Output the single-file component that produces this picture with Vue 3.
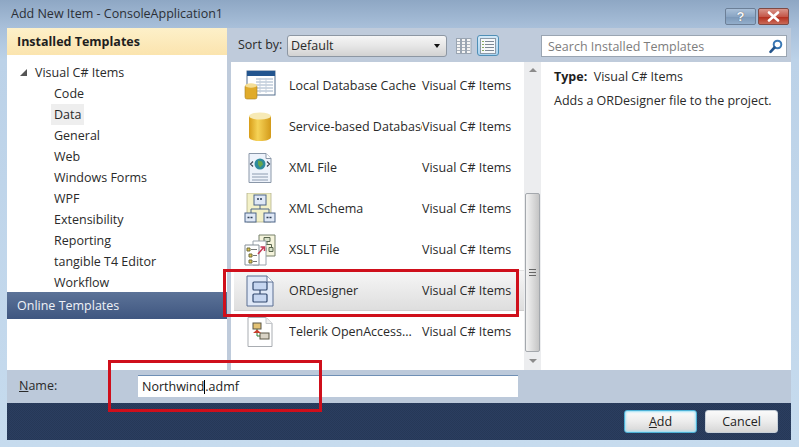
<script setup>
const tree = ['Code', 'Data', 'General', 'Web', 'Windows Forms', 'WPF', 'Extensibility', 'Reporting', 'tangible T4 Editor', 'Workflow']
const rows = [
  { id: 'cache', name: 'Local Database Cache' },
  { id: 'db', name: 'Service-based Database' },
  { id: 'xml', name: 'XML File' },
  { id: 'xsd', name: 'XML Schema' },
  { id: 'xslt', name: 'XSLT File' },
  { id: 'or', name: 'ORDesigner', selected: true },
  { id: 'tel', name: 'Telerik OpenAccess...' }
]
</script>

<template>
  <div class="window">
    <header class="titlebar">
      <span class="title">Add New Item - ConsoleApplication1</span>
      <div class="caption">
        <span class="cap help">?</span>
        <span class="cap close">
          <svg width="13" height="11" viewBox="0 0 13 11"><path d="M2 1.5l9 8M11 1.5l-9 8" stroke="#fff" stroke-width="2.6" stroke-linecap="round"/></svg>
        </span>
      </div>
    </header>

    <main class="main">
      <aside class="left">
        <div class="left-head">Installed Templates</div>
        <div class="tree">
          <div class="tree-root"><i class="tri"></i>Visual C# Items</div>
          <div v-for="t in tree" :key="t" class="tree-item"><span :class="{ cur: t === 'Data' }">{{ t }}</span></div>
        </div>
        <div class="online">Online Templates</div>
      </aside>

      <section class="right">
        <div class="toolbar">
          <span class="sort-label">Sort by:</span>
          <div class="select">Default<i class="drop"></i></div>
          <span class="view">
            <svg width="16" height="16" viewBox="0 0 16 16"><g fill="#f4f4f4" stroke="#9aa5b2"><rect x=".5" y=".5" width="4" height="15"/><rect x="5.5" y=".5" width="4" height="15"/><rect x="10.5" y=".5" width="4.5" height="15"/></g><path d="M1 3.5h3M1 6.5h3M1 9.5h3M1 12.5h3M6 3.5h3M6 6.5h3M6 9.5h3M6 12.5h3M11 3.5h3M11 6.5h3M11 9.5h3M11 12.5h3" stroke="#a9b1bb"/></svg>
          </span>
          <span class="view on">
            <svg width="16" height="16" viewBox="0 0 16 16"><rect x=".5" y=".5" width="15" height="15" fill="#f6f8fa" stroke="#8c9aa8"/><path d="M2 3.5h2M2 6.5h2M2 9.5h2M2 12.5h2" stroke="#88a860"/><path d="M5 3.5h9M5 6.5h9M5 9.5h9M5 12.5h9" stroke="#7d8894"/></svg>
          </span>
          <div class="search">
            <span>Search Installed Templates</span>
            <svg width="14" height="15" viewBox="0 0 14 15"><circle cx="8.5" cy="5.5" r="3.8" fill="none" stroke="#3a78b5" stroke-width="2"/><path d="M5.5 8.5L1.5 12.8" stroke="#24558c" stroke-width="2.6" stroke-linecap="round"/></svg>
          </div>
        </div>

        <div class="content">
          <div class="list">
            <div v-for="r in rows" :key="r.id" class="row" :class="{ sel: r.selected }">
              <span class="ico">
                <svg v-if="r.id === 'cache'" width="32" height="32" viewBox="0 0 32 32">
                  <rect x="3" y="1" width="28" height="24" fill="#fff" stroke="#56708f"/>
                  <rect x="3" y="1" width="28" height="5" fill="#23558f"/>
                  <path d="M12 9h17M12 12h17M12 15h17M12 18h17M12 21h17" stroke="#9db0c6"/>
                  <path d="M16 8v15M22 8v15" stroke="#c5d0dc"/>
                  <rect x="1" y="15" width="12" height="14" rx="2" fill="#e0ab2b" stroke="#a98220" stroke-width=".6"/>
                  <ellipse cx="7" cy="15.5" rx="6" ry="2.2" fill="#f4de97"/>
                </svg>
                <svg v-else-if="r.id === 'db'" width="32" height="32" viewBox="0 0 32 32">
                  <defs><linearGradient id="g" x1="0" x2="1" y1="0" y2="0"><stop offset="0" stop-color="#d89d18"/><stop offset=".4" stop-color="#f6d357"/><stop offset="1" stop-color="#d39a1a"/></linearGradient></defs>
                  <path d="M5 5v21c0 2.5 5 4 11 4s11-1.500 11-4V5z" fill="url(#g)"/>
                  <ellipse cx="16" cy="5" rx="11" ry="3.6" fill="#f7eab6"/>
                </svg>
                <svg v-else-if="r.id === 'xml'" width="32" height="32" viewBox="0 0 32 32">
                  <path d="M5 1.500h17l5 5v24H5z" fill="#eef3fb" stroke="#8a97a8"/>
                  <path d="M22 1.500v5h5" fill="#fff" stroke="#8a97a8"/>
                  <path d="M8 22h16M8 25h16M8 28h16" stroke="#8d9cb0"/>
                  <circle cx="16" cy="12" r="5.500" fill="#2f8a9c"/>
                  <path d="M14 8.500l4 1 1 3-3 3-2-3z" fill="#67a64d"/>
                  <path d="M9 9.500l-2.500 2.500 2.500 2.500M23 9.500l2.500 2.500-2.500 2.500" fill="none" stroke="#3c4756" stroke-width="1.200"/>
                </svg>
                <svg v-else-if="r.id === 'xsd'" width="32" height="32" viewBox="0 0 32 32">
                  <path d="M3 0h24v29H3z" fill="#f3f1c8" stroke="#a9a87e" stroke-width=".7"/>
                  <rect x="10" y="2" width="12" height="10" fill="#dfe8f6" stroke="#4c6587"/>
                  <path d="M13 6h6" stroke="#2d3d55" stroke-width="1.500" stroke-dasharray="2 1"/>
                  <path d="M16 12v4M7 20v-4h18v4" fill="none" stroke="#4c6587"/>
                  <rect x="1" y="20" width="11" height="9" fill="#dfe8f6" stroke="#4c6587"/>
                  <rect x="20" y="20" width="11" height="9" fill="#dfe8f6" stroke="#4c6587"/>
                  <path d="M3.500 24.500h6M22.500 24.500h6" stroke="#2d3d55" stroke-width="1.500" stroke-dasharray="2 1"/>
                </svg>
                <svg v-else-if="r.id === 'xslt'" width="32" height="32" viewBox="0 0 32 32">
                  <path d="M15 1h16v21H15z" fill="#f5f4dc" stroke="#76806a"/>
                  <path d="M20 3.500h6v4h-6zM17 13.500h5v4h-5zM25 13.500h4v4h-4z" fill="#d8e0c8" stroke="#59654e"/>
                  <path d="M23 7.500v3M19.500 13.500v-3h8v3" fill="none" stroke="#59654e"/>
                  <path d="M9 7h13v24H9z" fill="#fff" stroke="#9aa3ad"/>
                  <path d="M1 11h14v20H1z" fill="#fff" stroke="#858f99"/>
                  <path d="M3 14h3v3H3z" fill="#e3c64c" stroke="#6c6a3a"/><path d="M7 15.500h6" stroke="#777"/>
                  <path d="M5 20h3v3H5z" fill="#e3c64c" stroke="#6c6a3a"/><path d="M9 21.500h4" stroke="#777"/>
                  <path d="M5 26h3v3H5z" fill="#e3c64c" stroke="#6c6a3a"/><path d="M9 27.500h4" stroke="#777"/>
                  <path d="M14 20l6-7M16.500 13h4v4" fill="none" stroke="#c53a55" stroke-width="1.500"/>
                </svg>
                <svg v-else-if="r.id === 'or'" width="32" height="32" viewBox="0 0 32 32">
                  <path d="M3 1h20l6 6v24H3z" fill="#dfe8f7" stroke="#5b6f92"/>
                  <path d="M23 1v6h6" fill="#fff" stroke="#5b6f92"/>
                  <rect x="9" y="7" width="14" height="8" rx="1" fill="#c6d6f0" stroke="#33496f" stroke-width="1.200"/>
                  <rect x="9" y="19" width="14" height="8" rx="1" fill="#c6d6f0" stroke="#33496f" stroke-width="1.200"/>
                  <path d="M16 15v4" stroke="#33496f" stroke-width="1.200"/>
                </svg>
                <svg v-else width="32" height="32" viewBox="0 0 32 32">
                  <path d="M4 1.500h18l6 6v23H4z" fill="#fff" stroke="#a9adb2"/>
                  <path d="M22 1.500v6h6" fill="#f1f1f1" stroke="#c3c6ca"/>
                  <rect x="9" y="7" width="8" height="6" fill="#e3c274" stroke="#5b5747"/>
                  <rect x="16" y="17" width="9" height="6" fill="#d9d3c6" stroke="#5b5747"/>
                  <path d="M13 13v7h3" fill="none" stroke="#2e7a32"/>
                  <path d="M9 17l4-3.500 4 3.500z" fill="#c8402d"/>
                </svg>
              </span>
              <span class="nm">{{ r.name }}</span>
              <span class="ty">Visual C# Items</span>
            </div>
          </div>

          <div class="scroll">
            <i class="arr up"></i>
            <div class="thumb"><b></b></div>
            <i class="arr down"></i>
          </div>

          <div class="detail">
            <p class="d-type"><b>Type:</b>&nbsp; Visual C# Items</p>
            <p>Adds a ORDesigner file to the project.</p>
          </div>
        </div>
      </section>
    </main>

    <div class="namebar">
      <label class="nlabel"><u>N</u>ame:</label>
      <div class="ninput">Northwind<i class="caret"></i>.admf</div>
    </div>

    <footer class="footer">
      <button class="btn def"><u>A</u>dd</button>
      <button class="btn">Cancel</button>
    </footer>

    <div class="red red1"></div>
    <div class="red red2"></div>
  </div>
</template>

<style>
html, body { margin: 0; padding: 0; background: #c3d8ec; }
</style>

<style scoped>
.window {
  position: relative; width: 799px; height: 447px; box-sizing: border-box; overflow: hidden;
  padding: 0 8px 7px 7px; display: flex; flex-direction: column;
  background: linear-gradient(#8ea7c4 0, #a9c0da 28px, #bcd2e8 60px, #c6dbee 100%);
  font: 12.5px "Open Sans", "Noto Sans", sans-serif; color: #2a2a2a;
}
.titlebar { height: 28px; flex: none; display: flex; justify-content: space-between; position: relative; }
.title { padding: 5px 0 0 4px; font-size: 12.5px; line-height: 17px; color: #2b2f36; }
.caption { display: flex; gap: 2px; padding-top: 8px; margin-right: 2px; }
.cap { width: 31px; height: 17px; box-sizing: border-box; border-radius: 2px; display: flex; align-items: center; justify-content: center; font: bold 13px "Liberation Sans", sans-serif; }
.help { background: linear-gradient(#a9bfd8, #8ba6c4 50%, #7d99b9 55%, #93aecb); border: 1px solid #6c7f97; color: #f4f7fb; text-shadow: 0 0 1px #444; }
.close { background: linear-gradient(#d8958a, #c5584a 50%, #b5301f 55%, #c96a58); border: 1px solid #7f4a44; }

.main { flex: none; height: 342px; display: flex; background: #bfcbdb; }
.left { width: 220px; flex: none; background: #fff; display: flex; flex-direction: column; }
.left-head { height: 27px; box-sizing: border-box; padding: 5px 0 0 10px; font-weight: 700; font-size: 12.5px; line-height: 17px; color: #1e1e1e; background: linear-gradient(#fdf0c9, #fbe4ae); }
.tree { padding-top: 7px; height: 237px; box-sizing: border-box; flex: none; }
.tree-root { height: 21px; line-height: 21px; padding-left: 28px; position: relative; }
.tri { position: absolute; left: 13px; top: 7px; width: 0; height: 0; border-style: solid; border-width: 0 0 7px 7px; border-color: transparent transparent #555 transparent; }
.tree-item { height: 21px; line-height: 21px; padding-left: 44px; position: relative; }
.tree-item span { display: inline-block; padding: 0 3px; margin-left: 0; }
.cur { background: #eeeeee; }
.online { height: 27px; line-height: 27px; padding-left: 10px; color: #eef2f7; background: linear-gradient(#5c7398, #3f5680); }

.right { flex: 1; display: flex; flex-direction: column; padding-left: 4px; min-width: 0; }
.toolbar { height: 34px; flex: none; display: flex; align-items: flex-start; padding-top: 7px; box-sizing: border-box; }
.sort-label { width: 56px; padding-left: 7px; box-sizing: content-box; flex: none; width: 49px; line-height: 20px; }
.select { width: 160px; height: 22px; box-sizing: border-box; border: 1px solid #8d97a3; border-radius: 3px; background: linear-gradient(#f6f6f6, #e6e6e6 50%, #d2d2d2); line-height: 20px; padding-left: 3px; position: relative; margin-right: 7px; }
.drop { position: absolute; right: 6px; top: 8px; border-style: solid; border-width: 4px 3.500px 0; border-color: #111 transparent transparent; }
.view { width: 20px; height: 21px; flex: none; box-sizing: border-box; display: flex; align-items: center; justify-content: center; margin-right: 3px; }
.view.on { width: 22px; background: linear-gradient(#d3e9f8, #a9d2ef); border: 1px solid #4f8fb6; border-radius: 3px; }
.search { width: 246px; height: 22px; box-sizing: border-box; margin-left: 39px; background: #fff; border: 1px solid #9aa5b2; display: flex; justify-content: space-between; align-items: center; padding: 0 3px 0 6px; color: #7d7d7d; }

.content { flex: 1; display: flex; min-height: 0; }
.list { width: 293px; flex: none; background: #fff; padding-top: 3px; box-sizing: border-box; }
.row { height: 41px; display: flex; align-items: center; box-sizing: border-box; padding-left: 13px; }
.row.sel { background: linear-gradient(#f6f6f6, #dedede); border-top: 1px solid #e2e2e2; border-bottom: 1px solid #cfcfcf; margin-left: 3px; padding-left: 10px; }
.ico { width: 32px; height: 32px; flex: none; margin-right: 13px; }
.ico svg { display: block; }
.nm { width: 133px; flex: none; overflow: hidden; white-space: nowrap; }
.ty { white-space: nowrap; }

.scroll { width: 17px; flex: none; background: #ecedef; position: relative; display: flex; flex-direction: column; align-items: center; }
.arr { position: absolute; left: 5px; border-style: solid; border-color: transparent; }
.arr.up { top: 6px; border-width: 0 4px 4px; border-bottom-color: #8b8b8b; }
.arr.down { bottom: 7px; border-width: 4px 4px 0; border-top-color: #8b8b8b; }
.thumb { position: absolute; left: 1px; top: 131px; width: 15px; height: 159px; box-sizing: border-box; border: 1px solid #a4a8ad; border-radius: 2px; background: linear-gradient(90deg, #f3f3f3, #dcdcdc 50%, #c5c5c5); display: flex; align-items: center; justify-content: center; }
.thumb b { width: 7px; height: 7px; background: repeating-linear-gradient(#666 0 1px, transparent 1px 3px); }
.detail { flex: 1; background: #fff; padding: 5px 0 0 13px; }
.detail p { margin: 0; height: 24px; line-height: 20px; white-space: nowrap; }
.detail b { color: #1e1e1e; }

.namebar { height: 33px; flex: none; display: flex; background: #bcc9da; align-items: flex-start; padding-top: 5px; box-sizing: border-box; }
.nlabel { width: 131px; padding-left: 12px; box-sizing: border-box; line-height: 22px; }
.ninput { width: 380px; height: 22px; background: #fff; border-top: 1px solid #6f8fb5; box-sizing: border-box; line-height: 21px; padding-left: 4px; color: #1b1b1b; white-space: nowrap; }
.caret { display: inline-block; width: 1px; height: 14px; background: #000; vertical-align: -3px; }

.footer { height: 37px; flex: none; display: flex; justify-content: flex-end; gap: 8px; padding: 7px 13px 0 0; box-sizing: border-box; background: repeating-conic-gradient(#2b3e60 0 25%, #263857 0 50%) 0 0 / 2px 2px; }
.btn { width: 73px; height: 23px; border: 1px solid #c8d0d8; border-radius: 3px; padding: 0; background: linear-gradient(#fafafa, #ececec 50%, #d6d6d6); font: 12.5px "Open Sans", "Noto Sans", sans-serif; color: #222; }
.btn.def { border-color: #4db1d6; box-shadow: inset 0 0 2px 1px #9fe0f5; }

.red { position: absolute; box-sizing: border-box; border: 3.500px solid #cf0f1b; pointer-events: none; }
.red1 { left: 223px; top: 269px; width: 296px; height: 48px; }
.red2 { left: 108px; top: 360px; width: 214px; height: 52px; }
</style>
